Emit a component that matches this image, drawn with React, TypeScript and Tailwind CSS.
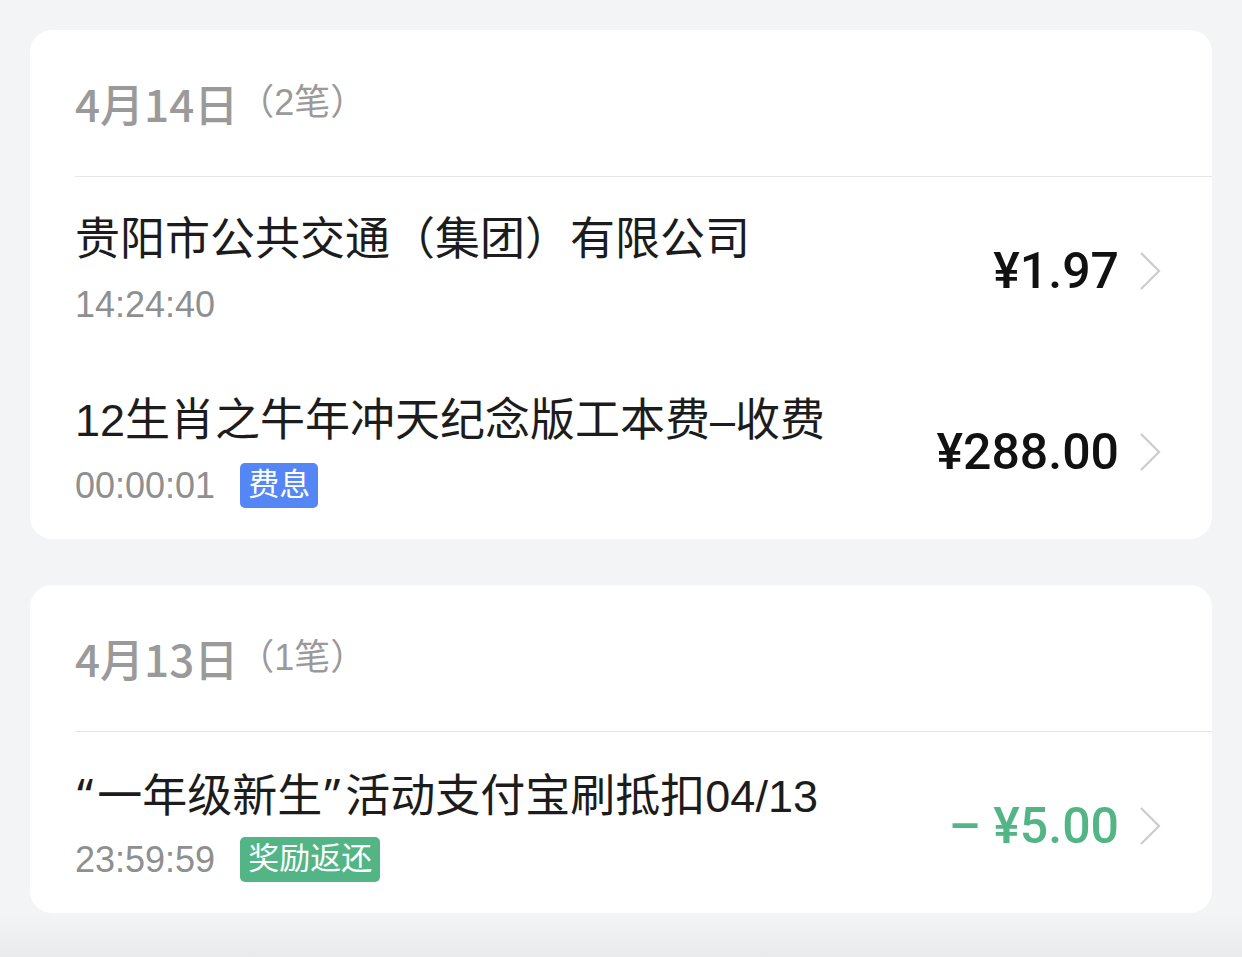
import React from 'react';

type Bill = {
  title: React.ReactNode;
  time: string;
  amount: string;
  tag?: { text: string; color: string };
  refund?: boolean;
};

type Day = {
  date: string;
  count: number;
  bills: Bill[];
};

const cjk = { fontFamily: '"Noto Sans CJK SC", sans-serif' };
const num = { fontFamily: 'Roboto, "Liberation Sans", sans-serif' };
const quote = { fontFamily: '"Noto Sans", "Liberation Sans", sans-serif' };

const days: Day[] = [
  {
    date: '4月14日',
    count: 2,
    bills: [
      { title: '贵阳市公共交通（集团）有限公司', time: '14:24:40', amount: '¥1.97' },
      {
        title: '12生肖之牛年冲天纪念版工本费–收费',
        time: '00:00:01',
        amount: '¥288.00',
        tag: { text: '费息', color: 'bg-[#5586f5]' },
      },
    ],
  },
  {
    date: '4月13日',
    count: 1,
    bills: [
      {
        title: (
          <>
            <span className="ml-[2px] mr-[4px]" style={quote}>“</span>一年级新生
            <span className="ml-[2px] mr-[5px]" style={quote}>”</span>活动支付宝刷抵扣04/13
          </>
        ),
        time: '23:59:59',
        amount: '– ¥5.00',
        tag: { text: '奖励返还', color: 'bg-[#53b585]' },
        refund: true,
      },
    ],
  },
];

const font = { fontFamily: '"Liberation Sans", "Noto Sans CJK SC", sans-serif' };

const Chevron = () => (
  <svg width="24" height="40" viewBox="0 0 24 40" fill="none" className="shrink-0">
    <polyline points="3,2 21,20 3,38" stroke="#cccccc" strokeWidth="2.2" strokeLinejoin="miter" />
  </svg>
);

const BillRow: React.FC<{ bill: Bill }> = ({ bill }) => (
  <div className="flex items-center pl-[45px] pr-[50px] pt-[38px] pb-[31px]">
    <div className="flex-1 min-w-0 flex flex-col gap-[17px]">
      <div className="h-[50px] text-[45px] leading-[50px] text-[#1c1c1c] whitespace-nowrap">{bill.title}</div>
      <div className="h-[45px] flex items-center gap-[25px]">
        <span className="text-[36px] text-[#8f8f8f] leading-none">{bill.time}</span>
        {bill.tag && (
          <span
            className={`${bill.tag.color} text-white text-[31px] leading-[44px] h-[45px] px-[8px] rounded-[5px]`}
          >
            {bill.tag.text}
          </span>
        )}
      </div>
    </div>
    <div className="flex items-center gap-[19px] ml-4">
      <span
        className={`text-[50px] font-medium leading-none whitespace-pre ${
          bill.refund ? 'text-[#53b585]' : 'text-[#111111]'
        }`}
        style={num}
      >
        {bill.amount}
      </span>
      <Chevron />
    </div>
  </div>
);

const DayCard: React.FC<{ day: Day }> = ({ day }) => (
  <div className="bg-white rounded-[22px] overflow-hidden">
    {/* Date header */}
    <div className="ml-[45px] h-[147px] flex items-center border-b border-[#e6e6e6]">
      <span className="text-[44px] font-medium text-[#9a9a9a]" style={cjk}>
        {day.date}
      </span>
      <span className="text-[36px] text-[#9a9a9a]">（{day.count}笔）</span>
    </div>
    {day.bills.map((bill, i) => (
      <BillRow key={i} bill={bill} />
    ))}
  </div>
);

const App: React.FC = () => {
  return (
    <div
      className="min-h-[957px] bg-[linear-gradient(to_bottom,#f3f4f6_915px,#e9eaec_957px)] px-[30px] pt-[30px] flex flex-col gap-[46px]"
      style={font}
    >
      {days.map((day) => (
        <DayCard key={day.date} day={day} />
      ))}
    </div>
  );
};

export default App;
